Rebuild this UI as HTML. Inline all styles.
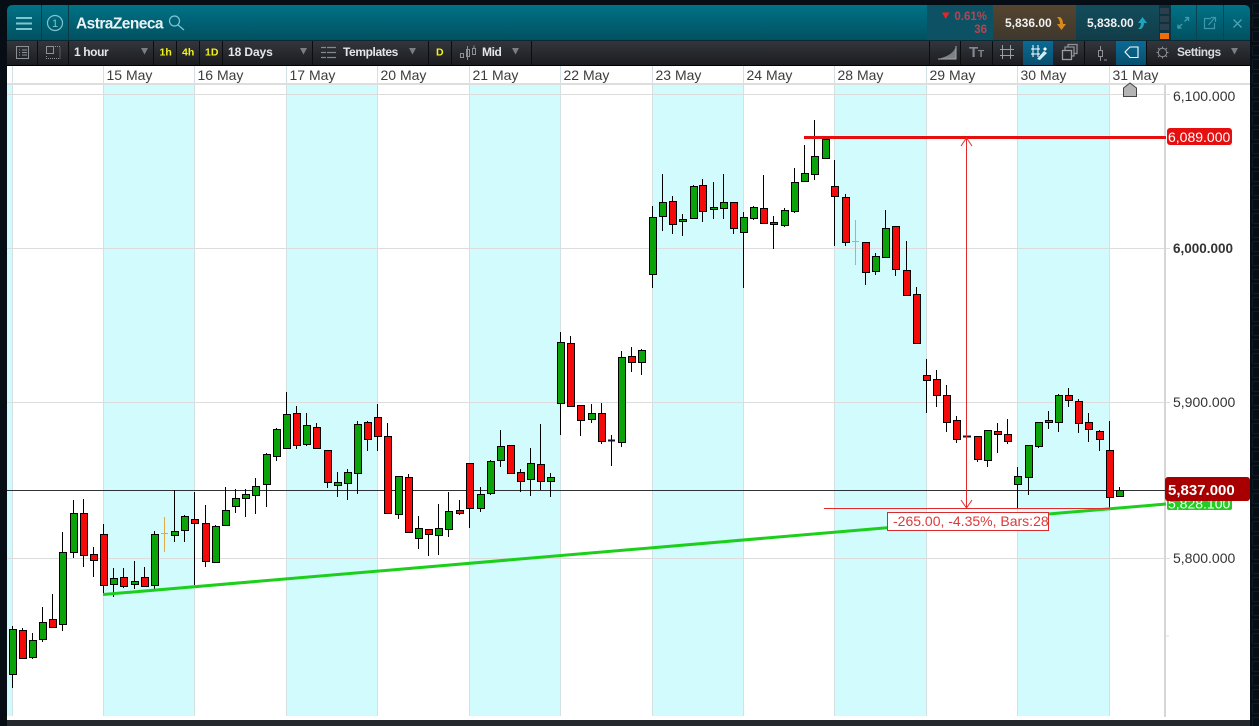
<!DOCTYPE html>
<html><head><meta charset="utf-8"><title>AstraZeneca</title>
<style>
html,body{margin:0;padding:0;background:#060d14;width:1259px;height:726px;overflow:hidden}
svg{display:block;font-family:"Liberation Sans",Arial,sans-serif}
.g rect{width:7px;fill:#0aa30a;stroke:#000;stroke-width:1}
.r rect{width:7px;fill:#f50a0a;stroke:#000;stroke-width:1}
.d{font-size:14px;fill:#3c3c3c}
.a{font-size:14px;fill:#333}
.t{font-size:12px;font-weight:bold;fill:#e4e6e8;letter-spacing:-.4px}
.y{font-size:10.5px;font-weight:bold;fill:#f2f21e}
.ic{fill:none;stroke:#8d9196;stroke-width:1}
.ib{fill:none;stroke:#7ec6d2;stroke-width:1.2}
</style></head><body>
<svg width="1259" height="726" viewBox="0 0 1259 726" xmlns="http://www.w3.org/2000/svg">
<defs>
<linearGradient id="tb" x1="0" y1="0" x2="0" y2="1"><stop offset="0" stop-color="#007287"/><stop offset="1" stop-color="#00505f"/></linearGradient>
<linearGradient id="tl" x1="0" y1="0" x2="0" y2="1"><stop offset="0" stop-color="#33363c"/><stop offset="1" stop-color="#1a1c20"/></linearGradient>
<linearGradient id="bl" x1="0" y1="0" x2="0" y2="1"><stop offset="0" stop-color="#0b6a94"/><stop offset="1" stop-color="#07506f"/></linearGradient>
<linearGradient id="bd" x1="0" y1="0" x2="0" y2="1"><stop offset="0" stop-color="#56452f"/><stop offset="1" stop-color="#3d372e"/></linearGradient>
<linearGradient id="ak" x1="0" y1="0" x2="0" y2="1"><stop offset="0" stop-color="#124d5c"/><stop offset="1" stop-color="#123c49"/></linearGradient>
<pattern id="sq" width="14" height="14" patternUnits="userSpaceOnUse" x="1252" y="3"><rect x=".5" y=".5" width="9" height="10" rx="1" fill="none" stroke="#101c25"/></pattern>
</defs>
<rect width="1259" height="726" fill="#060d14"/>
<rect x="1250" y="0" width="9" height="726" fill="url(#sq)"/>
<!-- title bar -->
<path d="M7 41V11q0-6 6-6H1244q6 0 6 6V41z" fill="url(#tb)"/>
<path d="M41.500 5V41M68.500 5V41" stroke="#0b3b47"/>
<path d="M16 18H32M16 23.500H32M16 29H32" fill="none" stroke="#7ec6d2" stroke-width="2"/>
<circle cx="55" cy="23" r="7.500" class="ib"/>
<text x="55" y="27" text-anchor="middle" font-size="11" fill="#7ec6d2">1</text>
<text x="76" y="28.500" font-size="15.500" font-weight="bold" fill="#e9f3f5" letter-spacing="-.55">AstraZeneca</text>
<circle cx="174.500" cy="21" r="5" class="ib"/><path d="M178 25L184 30" class="ib" stroke-width="1.500"/>
<!-- price area -->
<rect x="927" y="5" width="66" height="36" fill="#0c5264"/>
<rect x="993" y="5" width="83" height="36" fill="url(#bd)"/>
<rect x="1076" y="5" width="83" height="36" fill="url(#ak)"/>
<rect x="1159" y="5" width="12" height="36" fill="#0e3340"/>
<rect x="1160" y="8" width="9" height="6" fill="#2c3f4c"/><rect x="1160" y="16" width="9" height="6" fill="#2c3f4c"/><rect x="1160" y="24" width="9" height="6" fill="#2c3f4c"/><rect x="1160" y="33" width="9" height="6" fill="#f26a0a"/>
<path d="M1196.500 5V41M1223.500 5V41" stroke="#0b4352"/>
<path d="M942 12.500h7.500l-3.750 6.500z" fill="#e22"/>
<text x="987" y="20" text-anchor="end" font-size="11.500" font-weight="bold" fill="#b8444f">0.61%</text>
<text x="987" y="33" text-anchor="end" font-size="11.500" font-weight="bold" fill="#b8444f">36</text>
<text x="1005" y="27" font-size="12" font-weight="bold" fill="#f0f0f0">5,836.00</text>
<path d="M1057 17h3q3 2 3 7h3l-4.500 6-4.500-6h3q0-4-3-7z" fill="#d98a1c"/>
<text x="1087" y="27" font-size="12" font-weight="bold" fill="#f0f0f0">5,838.00</text>
<path d="M1142.500 17l4.500 6h-3q0 4-3 6h-3q3-2 3-6h-3z" fill="#1fa4bb"/>
<path d="M1178 28l4-4M1178 24.500V28h3.500M1188.500 17.500l-4 4M1185 17.500h3.500V21" stroke="#3f9cae" stroke-width="1.300" fill="none"/>
<path d="M1211 18.500h-6.500v10h10V23M1208.500 25l6.500-7.500M1211 17.500h4.500V22" stroke="#3f97a8" stroke-width="1.200" fill="none"/>
<path d="M1233.500 19.500l8 8M1241.500 19.500l-8 8" stroke="#4ba3b3" stroke-width="1.300" fill="none"/>
<!-- toolbar -->
<rect x="7" y="41" width="1243" height="24" fill="url(#tl)"/>
<rect x="7" y="40" width="1243" height="1" fill="#0a2a33"/>
<rect x="7" y="65" width="1243" height="1" fill="#000"/>
<path d="M37.500 41V65M68.500 41V65M153.500 41V65M176.500 41V65M199.500 41V65M222.500 41V65M312.500 41V65M428.500 41V65M451.500 41V65M531.500 41V65M929.500 41V65M960.500 41V65M992.500 41V65M1023.500 41V65M1052.500 41V65M1084.500 41V65M1116.500 41V65M1146.500 41V65" stroke="#0c0d0f"/>
<rect x="1023" y="41" width="30" height="24" fill="url(#bl)"/>
<rect x="1116" y="41" width="30" height="24" fill="url(#bl)"/>
<rect x="16.500" y="46.500" width="12" height="12" class="ic"/><path d="M19 50h1M22 50h5M19 52.500h1M22 52.500h5M19 55h1M22 55h5" class="ic"/>
<rect x="46.500" y="46.500" width="7" height="7" class="ic"/><path d="M55 46.500h5v12h-13.500v-3.500" class="ic" stroke-dasharray="1 1"/>
<text x="74" y="56" class="t">1 hour</text><path d="M141 48h7l-3.500 6.500z" fill="#7b7f84"/>
<text x="159.500" y="55.500" class="y">1h</text><text x="182" y="55.500" class="y">4h</text><text x="205" y="55.500" class="y">1D</text>
<text x="228" y="56" class="t" style="letter-spacing:-.1px">18 Days</text><path d="M300 48h7l-3.500 6.500z" fill="#7b7f84"/>
<path d="M321 47.500h15M321 52.500h15M321 57.500h15" stroke="#85898e" stroke-width="1.200" stroke-dasharray="5 1 9"/>
<text x="343" y="56" class="t">Templates</text><path d="M409 48h7l-3.500 6.500z" fill="#7b7f84"/>
<text x="436" y="55.500" class="y">D</text>
<rect x="460.500" y="53.500" width="3" height="4" class="ic"/><rect x="466.500" y="49.500" width="3" height="7" class="ic"/><rect x="472.500" y="48.500" width="3" height="6" class="ic"/><path d="M467.500 46v14M474 45.500v3" class="ic"/>
<text x="482" y="56" class="t">Mid</text><path d="M512 48h7l-3.500 6.500z" fill="#7b7f84"/>
<path d="M938 59h18V46q-2 9-18 13z" fill="#7e8287"/><path d="M938 59h18V46" fill="none" stroke="#a4a8ad"/>
<text x="969" y="57" font-size="15" font-weight="bold" fill="#85898e">T</text><text x="978" y="57" font-size="10" font-weight="bold" fill="#85898e">T</text>
<path d="M1002.500 45v14M1010.500 45v14M1000 49.500h14M1000 55.500h14" stroke="#9a9ea3" fill="none"/>
<path d="M1033 45v12M1038 45v12M1031 49h9M1031 54h9" stroke="#fff" fill="none"/><path d="M1037 59l7-8 3 2-7 7z" fill="#d4ecf4"/><path d="M1045 47l2 2-2 2-2-2z" fill="#fff"/>
<rect x="1062.500" y="50.500" width="9" height="9" fill="none" stroke="#9a9ea3" stroke-width="1.300"/><path d="M1065 50v-3h9v9h-2M1068 47v-2.500h9v9h-3" fill="none" stroke="#8d9196" stroke-width="1.300"/>
<rect x="1098.500" y="50.500" width="4" height="6" class="ic"/><path d="M1100.500 46v4M1100.500 57v4M1104 60h3" class="ic"/>
<path d="M1125 52l5-5h8v10.500h-8z" fill="none" stroke="#fff" stroke-width="1.100"/>
<circle cx="1162.500" cy="52.500" r="4.200" class="ic" stroke-width="1.600"/><path d="M1162.500 46.500v2M1162.500 56.500v2M1156.500 52.500h2M1166.500 52.500h2M1158 48l1.500 1.500M1165.500 55.500l1.500 1.500M1167 48l-1.500 1.500M1159.500 55.500l-1.500 1.500" class="ic" stroke-width="1.500"/>
<text x="1177" y="56" font-size="12" font-weight="bold" fill="#d8dadc" letter-spacing="-.45">Settings</text><path d="M1231 48h7l-3.500 6.500z" fill="#7b7f84"/>
<!-- chart -->
<rect x="7" y="66" width="1243" height="654" fill="#fff"/>
<rect x="7" y="84" width="5" height="632" fill="#d1fbfd"/>
<rect x="103" y="84" width="91" height="632" fill="#d1fbfd"/>
<rect x="286" y="84" width="91" height="632" fill="#d1fbfd"/>
<rect x="469" y="84" width="91" height="632" fill="#d1fbfd"/>
<rect x="652" y="84" width="91" height="632" fill="#d1fbfd"/>
<rect x="834" y="84" width="92" height="632" fill="#d1fbfd"/>
<rect x="1017" y="84" width="92" height="632" fill="#d1fbfd"/>
<path d="M12.500 66V716M103.500 66V716M194.500 66V716M286.500 66V716M377.500 66V716M469.500 66V716M560.500 66V716M652.500 66V716M743.500 66V716M834.500 66V716M926.500 66V716M1017.500 66V716M1109.500 66V716" stroke="#d3e1e3"/>
<path d="M7 94.500H1170M7 248.500H1170M7 402.500H1170M7 558.500H1170" stroke="#dcdcdc"/>
<rect x="7" y="83" width="1243" height="2" fill="#dedede"/>
<rect x="1164" y="85" width="2" height="632" fill="#d6d6d6"/>
<path d="M1165 636h4" stroke="#dcdcdc"/>
<text class="d" x="106.500" y="80">15 May</text><text class="d" x="197.500" y="80">16 May</text><text class="d" x="289.500" y="80">17 May</text><text class="d" x="380.500" y="80">20 May</text><text class="d" x="472.500" y="80">21 May</text><text class="d" x="563.500" y="80">22 May</text><text class="d" x="655.500" y="80">23 May</text><text class="d" x="746.500" y="80">24 May</text><text class="d" x="837.500" y="80">28 May</text><text class="d" x="929.500" y="80">29 May</text><text class="d" x="1020.500" y="80">30 May</text><text class="d" x="1112.500" y="80">31 May</text>
<text class="a" x="1173" y="101">6,100.000</text><text class="a" x="1173" y="253" font-weight="bold" style="font-size:13.500px">6,000.000</text><text class="a" x="1173" y="407">5,900.000</text><text class="a" x="1173" y="563">5,800.000</text>
<path d="M1123.500 96.500V88l6.500-5 6.500 5v8.500z" fill="#b4b4b4" stroke="#444"/>
<path d="M7 490.500H1165" stroke="#2f3338"/>
<!-- wicks -->
<path stroke="#000" fill="none" d="M12.500 626V688M22.500 628V658M32.500 633V659M42.500 607V642M52.500 594V627M62.500 532V631M73.500 500V558M83.500 499V567M93.500 547V577M103.500 524V595M113.500 568V597M123.500 568V588M134.500 561V589M144.500 567V587M154.500 531V590M174.500 490V542M184.500 515V542M194.500 492V585M205.500 505V567M215.500 525V563M225.500 487V525M235.500 489V513M245.500 489V517M255.500 478V514M266.500 453V507M276.500 428V461M286.500 392V448M296.500 406V449M306.500 413V446M316.500 423V448M327.500 450V488M337.500 472V497M347.500 469V500M357.500 421V494M367.500 421V451M377.500 404V451M387.500 423V513M398.500 476V519M408.500 474V532M418.500 516V549M428.500 529V556M438.500 504V555M448.500 492V537M459.500 500V515M469.500 463V528M480.500 487V512M490.500 460V495M500.500 430V467M510.500 445V473M520.500 469V492M530.500 448V496M540.500 424V490M550.500 473V497M560.500 332V435M570.500 336V406M580.500 405V436M591.500 404V423M601.500 403V444M611.500 435V466M621.500 351V447M631.500 347V372M641.500 349V375M652.500 206V288M662.500 174V231M672.500 196V234M682.500 214V236M693.500 185V218M702.500 179V222M713.500 182V219M723.500 174V219M733.500 202V234M743.500 212V288M753.500 206V220M763.500 175V223M773.500 216V249M784.500 208V227M794.500 168V213M804.500 145V182M814.500 120V180M825.500 138V159M834.500 160V246M845.500 194V246M865.500 242V285M875.500 253V275M885.500 210V257M895.500 226V276M906.500 241V295M916.500 287V343M926.500 359V413M936.500 370V407M946.500 385V432M956.500 416V443M977.500 436V462M987.500 430V467M997.500 423V453M1007.500 419V444M1017.500 467V509M1028.500 445V495M1038.500 422V448M1048.500 411V429M1058.500 394V432M1068.500 388V407M1078.500 399V433M1088.500 413V442M1099.500 430V451M1109.500 421V508M1119.500 487V497"/>
<!-- dojis -->
<path d="M164.500 517V552M161 533.500H168M855.500 220V265M852 241.500H859" stroke="#dfa94a" fill="none"/>
<path d="M608 440.500H615M963 436.500H971" stroke="#14142a" stroke-width="2" fill="none"/>
<g class="g">
<rect x="9.500" y="629.500" height="45"/><rect x="29.500" y="640.500" height="17"/><rect x="39.500" y="622.500" height="17"/><rect x="59.500" y="552.500" height="72"/><rect x="70.500" y="513.500" height="39"/><rect x="110.500" y="578.500" height="6"/><rect x="131.500" y="581.500" height="3"/><rect x="151.500" y="534.500" height="51"/><rect x="171.500" y="531.500" height="4"/><rect x="181.500" y="516.500" height="14"/><rect x="212.500" y="526.500" height="36"/><rect x="222.500" y="510.500" height="15"/><rect x="232.500" y="498.500" height="8"/><rect x="242.500" y="494.500" height="4"/><rect x="252.500" y="486.500" height="9"/><rect x="263.500" y="454.500" height="30"/><rect x="273.500" y="429.500" height="27"/><rect x="283.500" y="414.500" height="34"/><rect x="303.500" y="425.500" height="19"/><rect x="334.500" y="482.500" height="3"/><rect x="344.500" y="472.500" height="11"/><rect x="354.500" y="424.500" height="49"/><rect x="395.500" y="476.500" height="38"/><rect x="415.500" y="528.500" height="10"/><rect x="435.500" y="528.500" height="7"/><rect x="445.500" y="511.500" height="18"/><rect x="477.500" y="494.500" height="14"/><rect x="487.500" y="461.500" height="32"/><rect x="497.500" y="446.500" height="14"/><rect x="527.500" y="463.500" height="16"/><rect x="547.500" y="477.500" height="4"/><rect x="557.500" y="342.500" height="61"/><rect x="588.500" y="413.500" height="6"/><rect x="618.500" y="357.500" height="85"/><rect x="638.500" y="350.500" height="12"/><rect x="649.500" y="217.500" height="57"/><rect x="659.500" y="202.500" height="14"/><rect x="679.500" y="219.500" height="2"/><rect x="690.500" y="186.500" height="32"/><rect x="710.500" y="207.500" height="2"/><rect x="720.500" y="202.500" height="6"/><rect x="740.500" y="217.500" height="15"/><rect x="750.500" y="207.500" height="11"/><rect x="781.500" y="210.500" height="15"/><rect x="791.500" y="182.500" height="29"/><rect x="801.500" y="173.500" height="8"/><rect x="811.500" y="156.500" height="18"/><rect x="822.500" y="139.500" height="19"/><rect x="872.500" y="256.500" height="15"/><rect x="882.500" y="228.500" height="29"/><rect x="984.500" y="430.500" height="30"/><rect x="1014.500" y="476.500" height="8"/><rect x="1025.500" y="445.500" height="32"/><rect x="1035.500" y="422.500" height="24"/><rect x="1045.500" y="420.500" height="2"/><rect x="1055.500" y="395.500" height="27"/><rect x="1116.500" y="490.500" height="6"/>
</g>
<g class="r">
<rect x="19.500" y="630.500" height="28"/><rect x="49.500" y="619.500" height="8"/><rect x="80.500" y="513.500" height="42"/><rect x="90.500" y="554.500" height="6"/><rect x="100.500" y="534.500" height="51"/><rect x="120.500" y="577.500" height="9"/><rect x="141.500" y="577.500" height="9"/><rect x="191.500" y="519.500" height="4"/><rect x="202.500" y="523.500" height="38"/><rect x="293.500" y="413.500" height="32"/><rect x="313.500" y="427.500" height="21"/><rect x="324.500" y="450.500" height="32"/><rect x="364.500" y="422.500" height="17"/><rect x="374.500" y="417.500" height="19"/><rect x="384.500" y="436.500" height="77"/><rect x="405.500" y="477.500" height="55"/><rect x="425.500" y="529.500" height="5"/><rect x="456.500" y="510.500" height="3"/><rect x="466.500" y="463.500" height="45"/><rect x="507.500" y="445.500" height="28"/><rect x="517.500" y="472.500" height="9"/><rect x="537.500" y="464.500" height="17"/><rect x="567.500" y="343.500" height="63"/><rect x="577.500" y="405.500" height="15"/><rect x="598.500" y="413.500" height="28"/><rect x="628.500" y="356.500" height="6"/><rect x="669.500" y="201.500" height="23"/><rect x="699.500" y="185.500" height="26"/><rect x="730.500" y="202.500" height="26"/><rect x="760.500" y="208.500" height="15"/><rect x="770.500" y="222.500" height="2"/><rect x="831.500" y="186.500" height="10"/><rect x="842.500" y="197.500" height="45"/><rect x="862.500" y="242.500" height="30"/><rect x="892.500" y="226.500" height="43"/><rect x="903.500" y="270.500" height="25"/><rect x="913.500" y="294.500" height="49"/><rect x="923.500" y="375.500" height="5"/><rect x="933.500" y="379.500" height="16"/><rect x="943.500" y="395.500" height="27"/><rect x="953.500" y="420.500" height="19"/><rect x="974.500" y="436.500" height="23"/><rect x="994.500" y="431.500" height="3"/><rect x="1004.500" y="434.500" height="7"/><rect x="1065.500" y="395.500" height="5"/><rect x="1075.500" y="401.500" height="22"/><rect x="1085.500" y="422.500" height="7"/><rect x="1096.500" y="431.500" height="8"/><rect x="1106.500" y="450.500" height="47"/>
</g>
<!-- trend line -->
<path d="M103 594.500L1166 504" stroke="#1ccf1c" stroke-width="3" fill="none"/>
<rect x="1167" y="496" width="65" height="14" rx="2" fill="#22cc22"/>
<text x="1168" y="508.500" font-size="14" fill="#fff">5,828.100</text>
<!-- red line -->
<rect x="804" y="136" width="362" height="3" fill="#e60f0f"/>
<rect x="1167" y="128" width="65" height="17" rx="3" fill="#e60f0f"/>
<text x="1168" y="142" font-size="14" fill="#fff">6,089.000</text>
<!-- measure -->
<path d="M966.500 137V508M961 146l5.500-8 5.500 8M961 500l5.500 8 5.500-8M824 508.500H1110" stroke="#e22a2a" fill="none"/>
<rect x="887.500" y="512.500" width="161" height="18" fill="#fff" stroke="#d92b2b"/>
<text x="893" y="526" font-size="14" fill="#dc3a3a">-265.00, -4.35%, Bars:28</text>
<!-- last price -->
<rect x="1165" y="477" width="85" height="24" rx="3" fill="#a80000"/>
<text x="1168" y="495" font-size="15" font-weight="bold" fill="#fff">5,837.000</text>
<!-- bottom -->
<rect x="7" y="720" width="1243" height="6" fill="#25282d"/>
</svg>
</body></html>
